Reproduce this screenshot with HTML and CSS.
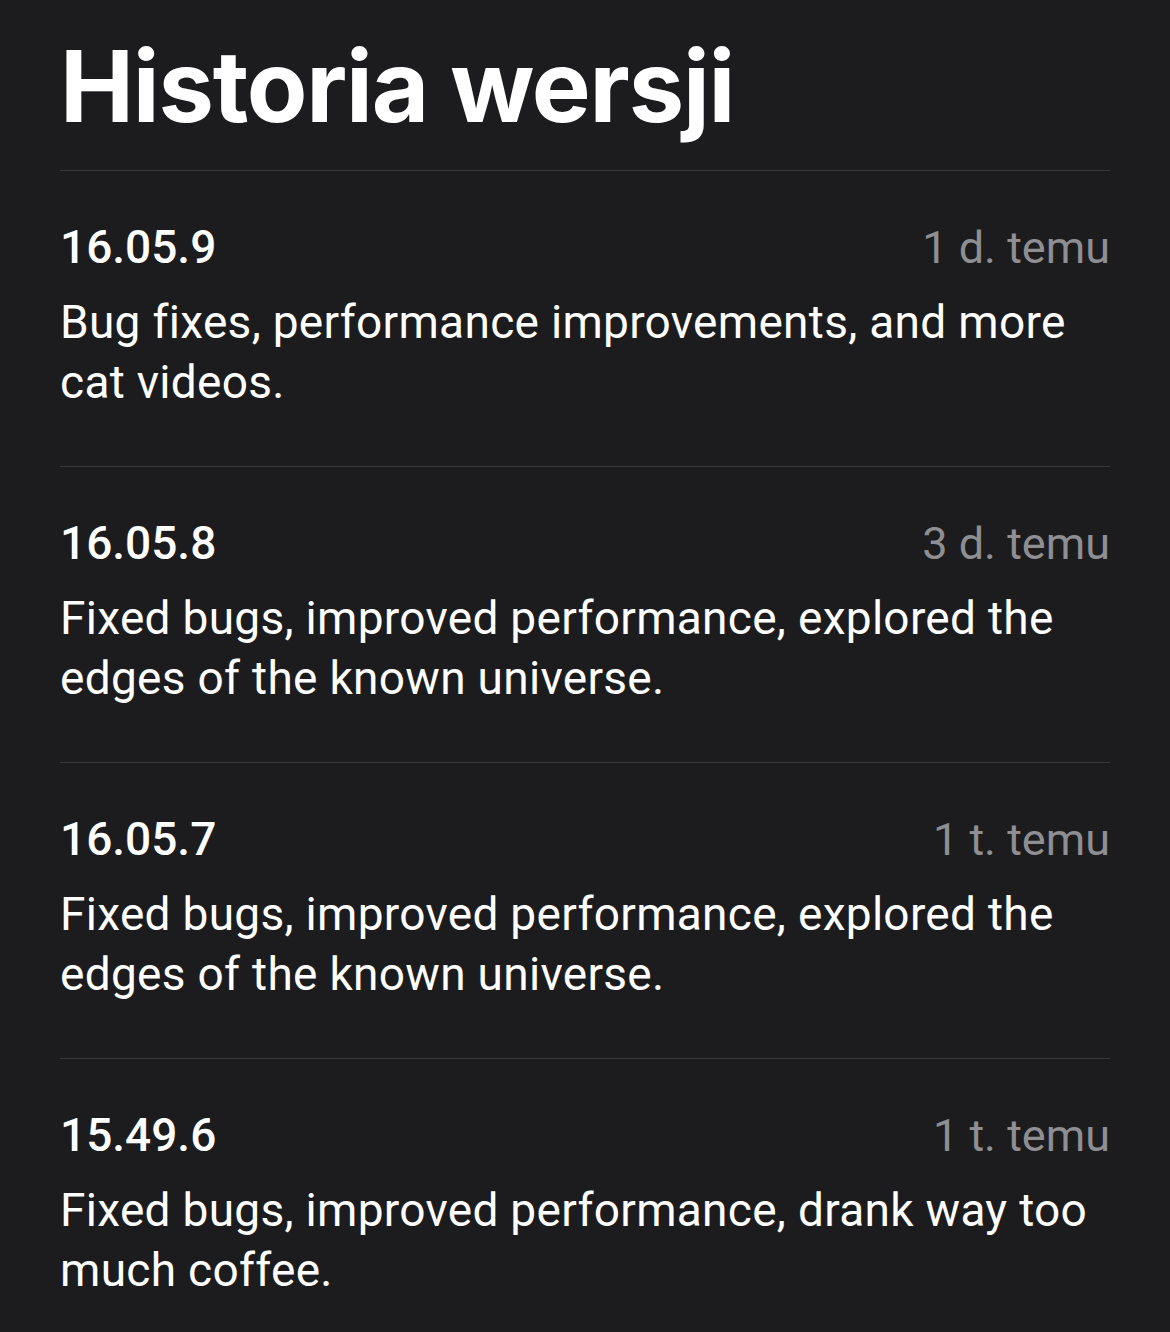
FILE: index.html
```html
<!DOCTYPE html>
<html lang="pl">
<head>
<meta charset="utf-8">
<title>Historia wersji</title>
<link rel="stylesheet" href="styles.css">
</head>
<body>
<main class="page">
  <h1 class="title">Historia wersji</h1>
  <ul class="versions">
    <li class="version">
      <div class="version-head">
        <span class="version-num">16.05.9</span>
        <span class="version-date">1 d. temu</span>
      </div>
      <p class="version-notes">Bug fixes, performance improvements, and more cat videos.</p>
    </li>
    <li class="version">
      <div class="version-head">
        <span class="version-num">16.05.8</span>
        <span class="version-date">3 d. temu</span>
      </div>
      <p class="version-notes">Fixed bugs, improved performance, explored the edges of the known universe.</p>
    </li>
    <li class="version">
      <div class="version-head">
        <span class="version-num">16.05.7</span>
        <span class="version-date">1 t. temu</span>
      </div>
      <p class="version-notes">Fixed bugs, improved performance, explored the edges of the known universe.</p>
    </li>
    <li class="version">
      <div class="version-head">
        <span class="version-num">15.49.6</span>
        <span class="version-date">1 t. temu</span>
      </div>
      <p class="version-notes">Fixed bugs, improved performance, drank way too much coffee.</p>
    </li>
  </ul>
</main>
</body>
</html>
```

FILE: styles.css
```css
html, body {
  margin: 0;
  padding: 0;
  background: #1c1c1e;
}
body {
  font-family: Roboto, "Noto Sans", "Liberation Sans", sans-serif;
  color: #ffffff;
  height: 1332px;
  overflow: hidden;
}
.page {
  padding: 26px 60px 0 60px;
}
.title {
  margin: 0;
  font-family: Inter, "Noto Sans", "Liberation Sans", sans-serif;
  font-size: 99px;
  line-height: 120px;
  font-weight: 700;
  letter-spacing: -1.2px;
  padding-bottom: 24px;
}
.versions {
  list-style: none;
  margin: 0;
  padding: 0;
}
.version {
  border-top: 1px solid #38383a;
  padding: 47px 0 54px 0;
}
.version-head {
  display: flex;
  justify-content: space-between;
  align-items: baseline;
  height: 58px;
  line-height: 58px;
}
.version-num {
  font-size: 46px;
  font-weight: 500;
}
.version-date {
  font-size: 45px;
  font-weight: 400;
  color: #8e8e93;
}
.version-notes {
  margin: 16px 0 0 0;
  font-size: 46px;
  line-height: 60px;
  font-weight: 400;
  letter-spacing: 0.3px;
}
```
